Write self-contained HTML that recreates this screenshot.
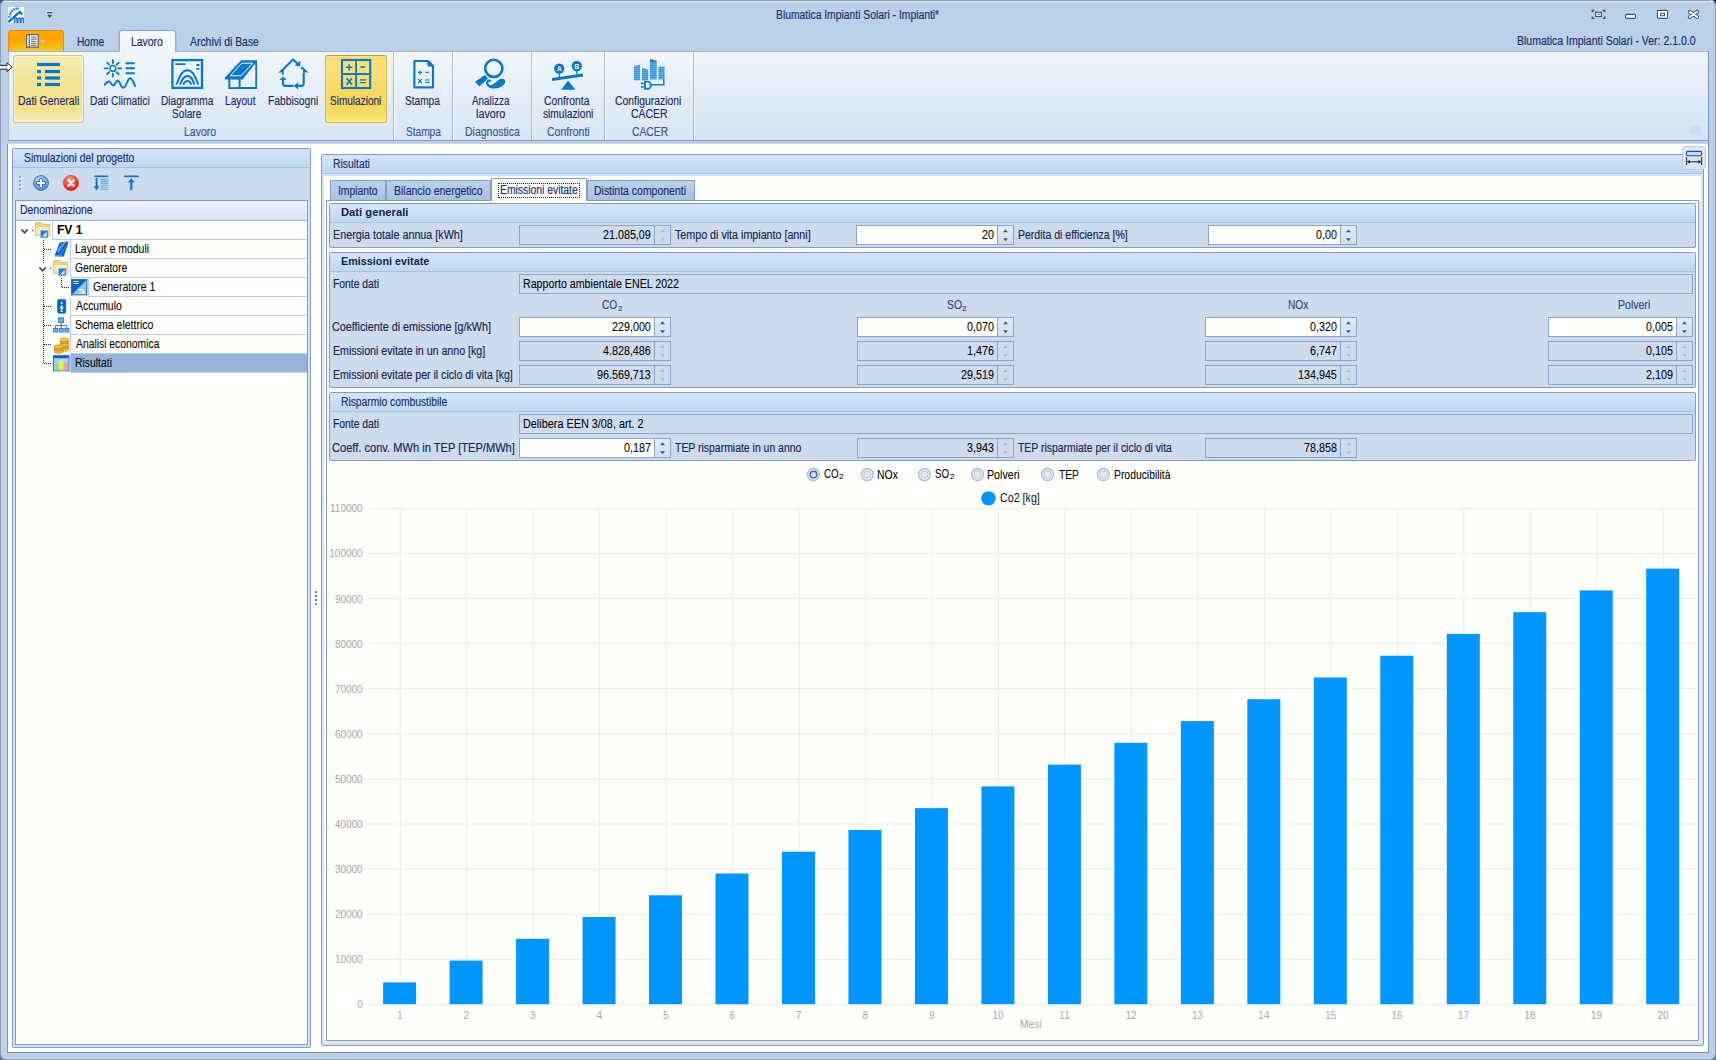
<!DOCTYPE html>
<html><head><meta charset="utf-8"><title>Blumatica Impianti Solari</title>
<style>
*{box-sizing:border-box;margin:0;padding:0}
html,body{width:1716px;height:1060px;overflow:hidden}
body{position:relative;background:#bbd0e9;font-family:"Liberation Sans",sans-serif;font-size:12px;color:#15284f}
.a{position:absolute}
.t{position:absolute;white-space:pre;transform-origin:0 50%;display:block;-webkit-text-stroke:.16px currentColor}
svg{position:absolute;overflow:visible}
.hl{position:absolute;height:1px}
.vl{position:absolute;width:1px}
.fld{position:absolute;height:20px;border:1px solid #8fa8c8;background:#cddcee}
.fld.w{background:#fffffb;border-color:#8fa8c8}
.fld .sp{position:absolute;right:0;top:0;bottom:0;width:17px;border-left:1px solid #8fa8c8;background:#cddcee}
.fld.w .sp{background:#d5e3f4}
.grp{position:absolute;border:1px solid #7f9fca;background:#cddcee;border-radius:2px}
.grp .gh{position:absolute;left:0;right:0;top:0;height:19px;background:linear-gradient(#d8e7fa,#c3d9f3);border-bottom:1px solid #a9c2e2}
.row{position:absolute;border-bottom:1px solid #b9d0f0;border-left:1px solid #b9d0f0;height:19px;background:#fffffb}

</style></head>
<body>
<div class="a" style="left:0px;top:0px;width:1716px;height:1060px;background:#bbd0e9;border:1px solid #8c9db4;border-radius:7px 7px 6px 6px"></div>
<div class="a" style="left:1px;top:1px;width:1714px;height:1px;background:#dde9f6;border-radius:6px"></div>
<svg style="left:0;top:0" width="1716" height="1060"><path d="M0 0H5Q1 1 0 5Z" fill="#27479a"/><path d="M1716 0H1712Q1715 1 1716 5Z" fill="#1b2f6e"/><path d="M0 1060V1054Q1 1059 6 1060Z" fill="#6a7a8c"/><path d="M1716 1060V1054Q1715 1059 1710 1060Z" fill="#6a7a8c"/></svg>
<span class="t" style="left:775.75px;top:8.84px;font-size:12px;line-height:12px;color:#1a2e6c;transform:scaleX(0.8612);">Blumatica Impianti Solari - Impianti*</span>
<span class="t" style="left:1516.64px;top:34.84px;font-size:12px;line-height:12px;color:#1a2e6c;transform:scaleX(0.8745);">Blumatica Impianti Solari - Ver: 2.1.0.0</span>
<svg style="left:8px;top:7px" width="16" height="16" viewBox="0 0 16 16"><rect width="16" height="16" fill="#fffffb"/>
<path d="M0.4 15 L11.8 4.9 L14 7.6" fill="none" stroke="#0a6fc2" stroke-width="2.3" stroke-linejoin="round"/>
<path d="M.2 9.7l2.3 .6M.7 7.1l2.2 .9M1.8 4.8l1.9 1.4M3.4 2.9l1.5 1.8M5.5 1.4l1 2.1M7.9 .5l.5 2.3M10.4 .2l-.2 2.3" stroke="#1a86d8" stroke-width="1.6"/>
<path d="M6.6 16v-3.9a1.25 1.25 0 0 1 2.5 0V16M9.8 16v-3.9a1.25 1.25 0 0 1 2.5 0V16M13 16v-3.9a1.25 1.25 0 0 1 2.5 0V16" fill="#a8d6f2" stroke="#0a6fc2" stroke-width="1.1"/></svg>
<svg style="left:46px;top:11px" width="8" height="8" viewBox="0 0 8 8"><rect x=".3" y=".2" width="6.6" height="2.6" rx="1" fill="#e6eef8"/><rect x="1" y="1" width="5.3" height="1.3" fill="#3c4150"/><path d="M.6 3.6H6.8L3.7 7.2Z" fill="#3c4150" stroke="#e6eef8" stroke-width=".5"/></svg>
<svg style="left:1590px;top:8px" width="112" height="13" viewBox="1590 8 112 13">
<g fill="none" stroke="#4a4d5c" stroke-width="1.3"><path d="M1592.3 12.3v-1.8h2M1604.7 12.3v-1.8h-2M1592.3 16.5v1.8h2M1604.7 16.5v1.8h-2"/></g>
<rect x="1595.6" y="12.3" width="5.8" height="4.2" fill="#fffffb" stroke="#4a4d5c" stroke-width="1.2"/><rect x="1597.4" y="14" width="2.2" height=".9" fill="#4a4d5c"/>
<rect x="1625.5" y="14.4" width="10" height="4" rx="1.2" fill="#fffffb" stroke="#4a4d5c" stroke-width="1.1"/>
<rect x="1657.5" y="10.4" width="10" height="8" rx="1.2" fill="#fffffb" stroke="#4a4d5c" stroke-width="1.1"/><rect x="1660.6" y="13.3" width="4" height="2.4" fill="#fffffb" stroke="#4a4d5c" stroke-width="1"/>
<path d="M1689.8 11.9L1697.1 16.9M1697.1 11.9L1689.8 16.9" stroke="#4a4d5c" stroke-width="4" stroke-linecap="round" fill="none"/><path d="M1689.8 11.9L1697.1 16.9M1697.1 11.9L1689.8 16.9" stroke="#fffffb" stroke-width="1.9" stroke-linecap="round" fill="none"/>
</svg>
<div class="a" style="left:8px;top:30px;width:56px;height:22px;border:1px solid #ff7a0a;border-bottom:none;border-radius:4px 4px 0 0;background:linear-gradient(#ffab08,#ffa500 45%,#f7bd10 75%,#f2d522)"></div>
<svg style="left:26px;top:34px" width="22" height="15" viewBox="0 0 22 15"><rect x=".6" y=".6" width="11.6" height="12.6" fill="#fffffb" stroke="#5a5e6e" stroke-width="1.2"/><path d="M3.2 .6v12.6" stroke="#5a5e6e" stroke-width="1.2"/><path d="M5 3.1h5.6M5 5.2h5.6M5 7.3h5.6M5 9.4h5.6M5 11.4h5.6" stroke="#5a5e6e" stroke-width="1"/><path d="M14.3 6.6h5l-2.5 2.6z" fill="#c9c0b8" stroke="#f0d890" stroke-width=".5"/></svg>
<div class="a" style="left:118px;top:30px;width:59px;height:22px;border-radius:4px 4px 0 0;background:linear-gradient(90deg,rgba(120,150,190,.0),rgba(120,150,190,.55) 2%,rgba(120,150,190,.0) 4%,rgba(120,150,190,0) 96%,rgba(120,150,190,.45) 98%,rgba(120,150,190,0))"></div>
<div class="a" style="left:119px;top:30px;width:57px;height:22.5px;border:1px solid #92abcc;border-bottom:none;border-radius:3px 3px 0 0;background:linear-gradient(#f6faff,#eef5fd)"></div>
<span class="t" style="left:76.96px;top:35.84px;font-size:12px;line-height:12px;color:#1a2e6c;transform:scaleX(0.8494);">Home</span>
<span class="t" style="left:131.44px;top:35.84px;font-size:12px;line-height:12px;color:#1a2e6c;transform:scaleX(0.8692);">Lavoro</span>
<span class="t" style="left:190.28px;top:35.84px;font-size:12px;line-height:12px;color:#1a2e6c;transform:scaleX(0.8679);">Archivi di Base</span>
<div class="a" style="left:8px;top:51px;width:1701px;height:90px;border:1px solid #8fb0d8;border-left-color:#a9bfdb;border-top-color:#9fb6d3;border-bottom-color:#849ec2;background:linear-gradient(#eef5fd,#e5eff9 30%,#d9e7f4 80%,#d4e4f2)"></div>
<div class="a" style="left:9px;top:52px;width:684px;height:88px;background:linear-gradient(#f0f6fd,#e8f1fa 30%,#dde9f5 80%,#d8e6f3)"></div>
<div class="a" style="left:120px;top:50px;width:55px;height:3px;background:linear-gradient(#eff5fd,#eef5fd)"></div>
<div class="a" style="left:8px;top:141px;width:1701px;height:3px;background:linear-gradient(#bccbdf,#c6d4e8)"></div>
<div class="a" style="left:392.5px;top:52px;width:1px;height:88px;background:linear-gradient(#b4c6dd,#a9bcd6 30%,#a3b8d4)"></div>
<div class="a" style="left:393.5px;top:52px;width:1px;height:88px;background:rgba(255,255,255,.7)"></div>
<div class="a" style="left:452px;top:52px;width:1px;height:88px;background:linear-gradient(#b4c6dd,#a9bcd6 30%,#a3b8d4)"></div>
<div class="a" style="left:453px;top:52px;width:1px;height:88px;background:rgba(255,255,255,.7)"></div>
<div class="a" style="left:531px;top:52px;width:1px;height:88px;background:linear-gradient(#b4c6dd,#a9bcd6 30%,#a3b8d4)"></div>
<div class="a" style="left:532px;top:52px;width:1px;height:88px;background:rgba(255,255,255,.7)"></div>
<div class="a" style="left:604px;top:52px;width:1px;height:88px;background:linear-gradient(#b4c6dd,#a9bcd6 30%,#a3b8d4)"></div>
<div class="a" style="left:605px;top:52px;width:1px;height:88px;background:rgba(255,255,255,.7)"></div>
<div class="a" style="left:693px;top:52px;width:1px;height:88px;background:linear-gradient(#b4c6dd,#a9bcd6 30%,#a3b8d4)"></div>
<div class="a" style="left:694px;top:52px;width:1px;height:88px;background:rgba(255,255,255,.7)"></div>
<div class="a" style="left:13px;top:55px;width:71px;height:68px;border:1px solid #e6c65c;border-radius:3px;box-shadow:inset 0 0 0 1px rgba(255,253,235,.55);background:linear-gradient(#f5edb6,#f3e597 35%,#f2df88 80%,#f4e6a2 89%,#f8f1cc)"></div>
<div class="a" style="left:325px;top:55px;width:62px;height:68px;border:1px solid #e2b340;border-top-color:#c99a35;border-radius:3px;box-shadow:inset 0 0 0 1px rgba(255,240,170,.35);background:linear-gradient(#f8dd72,#fbe07a 15%,#f9d962 55%,#f8d658 78%,#f6e26a 90%,#f4ec7c)"></div>
<span class="t" style="left:17.94px;top:94.84px;font-size:12px;line-height:12px;color:#1a2e6c;transform:scaleX(0.8741);">Dati Generali</span>
<span class="t" style="left:90.06px;top:94.84px;font-size:12px;line-height:12px;color:#1a2e6c;transform:scaleX(0.8532);">Dati Climatici</span>
<span class="t" style="left:161.07px;top:94.84px;font-size:12px;line-height:12px;color:#1a2e6c;transform:scaleX(0.8446);">Diagramma</span>
<span class="t" style="left:172.34px;top:107.84px;font-size:12px;line-height:12px;color:#1a2e6c;transform:scaleX(0.8450);">Solare</span>
<span class="t" style="left:225.47px;top:94.84px;font-size:12px;line-height:12px;color:#1a2e6c;transform:scaleX(0.8482);">Layout</span>
<span class="t" style="left:268.46px;top:94.84px;font-size:12px;line-height:12px;color:#1a2e6c;transform:scaleX(0.8548);">Fabbisogni</span>
<span class="t" style="left:330.34px;top:94.84px;font-size:12px;line-height:12px;color:#1a2e6c;transform:scaleX(0.8358);">Simulazioni</span>
<span class="t" style="left:404.84px;top:94.84px;font-size:12px;line-height:12px;color:#1a2e6c;transform:scaleX(0.8429);">Stampa</span>
<span class="t" style="left:472.28px;top:94.84px;font-size:12px;line-height:12px;color:#1a2e6c;transform:scaleX(0.8250);">Analizza</span>
<span class="t" style="left:475.82px;top:107.84px;font-size:12px;line-height:12px;color:#1a2e6c;transform:scaleX(0.8973);">lavoro</span>
<span class="t" style="left:544.27px;top:94.84px;font-size:12px;line-height:12px;color:#1a2e6c;transform:scaleX(0.8620);">Confronta</span>
<span class="t" style="left:542.52px;top:107.84px;font-size:12px;line-height:12px;color:#1a2e6c;transform:scaleX(0.8486);">simulazioni</span>
<span class="t" style="left:615.27px;top:94.84px;font-size:12px;line-height:12px;color:#1a2e6c;transform:scaleX(0.8653);">Configurazioni</span>
<span class="t" style="left:630.52px;top:107.84px;font-size:12px;line-height:12px;color:#1a2e6c;transform:scaleX(0.8668);">CACER</span>
<span class="t" style="left:184.44px;top:125.84px;font-size:12px;line-height:12px;color:#3a5590;transform:scaleX(0.8778);">Lavoro</span>
<span class="t" style="left:406.09px;top:125.84px;font-size:12px;line-height:12px;color:#3a5590;transform:scaleX(0.8429);">Stampa</span>
<span class="t" style="left:464.94px;top:125.84px;font-size:12px;line-height:12px;color:#3a5590;transform:scaleX(0.8733);">Diagnostica</span>
<span class="t" style="left:547.27px;top:125.84px;font-size:12px;line-height:12px;color:#3a5590;transform:scaleX(0.8758);">Confronti</span>
<span class="t" style="left:631.53px;top:125.84px;font-size:12px;line-height:12px;color:#3a5590;transform:scaleX(0.8607);">CACER</span>
<svg style="left:0;top:52px" width="720" height="44" viewBox="0 52 720 44"><g fill="#0a78c8"><rect x="37" y="62.9" width="23" height="3.2"/><rect x="37" y="69.9" width="4" height="3.2"/><rect x="45" y="69.9" width="15" height="3.2"/><rect x="37" y="76.4" width="4" height="3.2"/><rect x="45" y="76.4" width="15" height="3.2"/><rect x="37" y="82.9" width="4" height="3.2"/><rect x="45" y="82.9" width="15" height="3.2"/></g><g fill="none" stroke="#0a78c8" stroke-width="1.9" stroke-linecap="round"><circle cx="112.9" cy="68.4" r="2.9" stroke-width="1.5"/><path d="M118.20 68.40L121.10 68.40"/><path d="M116.65 72.15L118.70 74.20"/><path d="M112.90 73.70L112.90 76.60"/><path d="M109.15 72.15L107.10 74.20"/><path d="M107.60 68.40L104.70 68.40"/><path d="M109.15 64.65L107.10 62.60"/><path d="M112.90 63.10L112.90 60.20"/><path d="M116.65 64.65L118.70 62.60"/><path d="M125.6 63.3H134.8M125.6 68.3H134.8M125.6 73.3H134.8" stroke-width="2" stroke-linecap="butt"/><path d="M104.8 84.6C106.2 82.6 107.6 81.6 108.8 81.6C110.8 81.6 111.4 85.4 113.4 85.4C115.4 85.4 115.8 80.6 117.6 80.6C119.8 80.6 120.6 87.8 123.4 87.8C126.4 87.8 127.4 78.2 130 78.2C132.4 78.2 133.6 83.2 135.2 86" stroke-width="2"/></g><g fill="none" stroke="#0a78c8"><rect x="172.4" y="60.1" width="29.6" height="27.8" stroke-width="2.3"/><path d="M175.4 64.2H185.6M196.3 65H199.4M196.3 68.8H199.4" stroke-width="1.8"/><path d="M176.4 84.6C180 76 182 70.2 187.4 70.2C192.8 70.2 194.8 76 198.4 84.6" stroke-width="1.9"/><path d="M180 84.6C182 79.6 183.6 76 187.4 76C191.2 76 192.8 79.6 194.6 84.6" stroke-width="1.9"/><path d="M183.2 84.6C184.4 82.4 185.4 81 187.4 81C189.4 81 190.4 82.4 191.4 84.6" stroke-width="1.9"/></g><g><path d="M241.2 60.2H257.1V88.9H228.3V79.6H224.9V77.6Z" fill="#0a78c8"/><path d="M255.3 63.4L242.6 79.6H240.6V87.1H255.3Z" fill="#e9f1fb"/><path d="M230.3 79.6H238.6V87.1H230.3Z" fill="#e9f1fb"/><path d="M241.6 63.2H252.8L241.2 75.7H230.4Z" fill="none" stroke="#eef5fd" stroke-width="1"/></g><g fill="none" stroke="#0a78c8" stroke-width="2.1" stroke-linejoin="round"><path d="M281 71.4L293 59.4L298.6 64.6"/><path d="M301.4 67L305.8 71.4"/><path d="M303.7 72.4V83.4Q303.7 85.9 301.2 85.9H297.4"/><path d="M293.4 85.9H285.6Q283 85.9 283 83.4V79.4"/><path d="M283 74.6V72.4"/></g><g fill="#0a78c8"><path d="M300.6 60.6L299.9 66.4L294.8 65.4Z"/><path d="M278 72.6L283.6 68.8V72.6Z"/><path d="M308.9 72.6L303 68.4V72.6Z"/><path d="M293.6 85.9L298.2 82.2V89.6Z"/><path d="M283 76.6L286.6 80H279.4Z"/></g><g fill="none" stroke="#0a78c8"><rect x="342" y="60" width="28.2" height="28" stroke-width="2.1"/><path d="M356.1 60V88M342 74H370.2" stroke-width="1.8"/><path d="M346 67.3H352.4M349.2 64.2V70.4M360.4 67H365.2" stroke-width="1.6"/><path d="M346.6 78.2L352 84.6M352 78.2L346.6 84.6" stroke-width="1.7"/><path d="M360 79.8H366M360 82.6H366" stroke-width="1.3"/></g><g fill="none" stroke="#0a78c8"><path d="M414.4 61H428L433 66V87.4H414.4Z" stroke-width="2.1" stroke-linejoin="round"/><path d="M428 60.4L433.6 66H428Z" fill="#0a78c8" stroke-width="1"/><path d="M418 72.4H422M420 70.4V74.4M425.6 72.4H428.8" stroke-width="1.2"/><path d="M418.2 79.2L421.8 83M421.8 79.2L418.2 83" stroke-width="1.2"/><path d="M425 80H429.6M425 82.4H429.6" stroke-width="1"/></g><g><circle cx="493.8" cy="68.4" r="8.6" fill="none" stroke="#0a78c8" stroke-width="2.6"/><path d="M485 75.4L487.6 78.4L479.4 86L475.4 81.8Z" fill="#0a78c8" stroke="#0a78c8" stroke-width=".8" stroke-linejoin="round"/><path d="M488.6 79.6C485.4 80.4 485.2 85 488.4 87C492.4 89.6 499 88.8 503 85.6C506.4 82.8 506 79.2 502.6 78.8C498.6 78.4 496.6 82.4 492.6 84.6C489.6 86.2 487.4 84.2 488.6 82.2C489.4 81 491 81.4 491.2 82.4C491.6 80.6 490.4 79.2 488.6 79.6Z" fill="#0a78c8"/></g><g fill="#0a78c8"><circle cx="559.25" cy="68.6" r="5.2"/><circle cx="576.8" cy="66" r="5.2"/><path d="M552 78L583 73.4V76.4L552 81Z"/><rect x="558.7" y="73" width="1.2" height="5"/><rect x="576.2" y="70.6" width="1.2" height="4.4"/><path d="M568.2 80.4L575.4 89.8H561Z"/></g><text x="559.25" y="71.2" font-size="7" font-weight="bold" fill="#e9f1fb" text-anchor="middle" font-family="Liberation Sans">A</text><text x="576.8" y="68.6" font-size="7" font-weight="bold" fill="#e9f1fb" text-anchor="middle" font-family="Liberation Sans">B</text><g fill="#1480d2"><path d="M634 66L640.1 64.8V80.2H634Z"/><path d="M642 67.8L648.2 69.6V80.2H642Z"/><path d="M650 59L656.8 60.8V79.4H650Z"/><path d="M658.3 66.6H664.6V79.4H658.3Z"/></g><g stroke="#e3ecf8" stroke-width=".8" opacity=".75"><path d="M634 62.9H665"/><path d="M634 64.9H665"/><path d="M634 66.9H665"/><path d="M634 68.9H665"/><path d="M634 70.9H665"/><path d="M634 72.9H665"/><path d="M634 74.9H665"/><path d="M634 76.9H665"/><path d="M634 78.9H665"/></g><path d="M663.8 79V84.8H650.6" fill="none" stroke="#1480d2" stroke-width="1.5"/><path d="M645 81.6H647.4A3.4 3.6 0 0 1 647.4 88.8H645Z" fill="none" stroke="#1480d2" stroke-width="1.9"/><path d="M640.8 83.4H645M640.8 87H645" stroke="#1480d2" stroke-width="1.7"/></svg>
<svg style="left:0;top:58px" width="14" height="16" viewBox="0 58 14 16"><path d="M-1 65.4H7V62.8L12.2 67.2L7 71.6V69.2H-1Z" fill="#fffffb" stroke="#222" stroke-width="1"/></svg>
<svg style="left:1688px;top:122px" width="15" height="15" viewBox="0 0 15 15" opacity=".55"><rect x="1.5" y="3.5" width="11" height="9" fill="#b9def2"/><path d="M0 .5L14 14" stroke="#b9def2" stroke-width="1"/></svg>
<div class="a" style="left:7px;top:144px;width:1702px;height:909px;background:#fffffb;border-left:1px solid #6f93c2;border-right:1px solid #6f93c2;border-bottom:1px solid #6f93c2"></div>
<div class="a" style="left:12px;top:148px;width:299px;height:900px;border:1px solid #7f9fca;border-radius:2px;background:#d4e3f5"></div>
<div class="a" style="left:13px;top:149px;width:297px;height:18.5px;background:linear-gradient(#d3e5fa,#c9dff6 50%,#bfd7f1);border-bottom:1px solid #a9c2e2"></div>
<div class="a" style="left:13px;top:167.5px;width:297px;height:34px;background:#ccdced"></div>
<span class="t" style="left:24.08px;top:151.84px;font-size:12px;line-height:12px;color:#1a2e6c;transform:scaleX(0.8612);">Simulazioni del progetto</span>
<div class="a" style="left:19px;top:176px;width:2px;height:2px;background:#8da5c6;box-shadow:1px 1px 0 rgba(255,255,255,.6)"></div>
<div class="a" style="left:19px;top:180px;width:2px;height:2px;background:#8da5c6;box-shadow:1px 1px 0 rgba(255,255,255,.6)"></div>
<div class="a" style="left:19px;top:184px;width:2px;height:2px;background:#8da5c6;box-shadow:1px 1px 0 rgba(255,255,255,.6)"></div>
<div class="a" style="left:19px;top:188px;width:2px;height:2px;background:#8da5c6;box-shadow:1px 1px 0 rgba(255,255,255,.6)"></div>
<svg style="left:30px;top:172px" width="112" height="22" viewBox="30 172 112 22">
<defs><radialGradient id="gb" cx=".42" cy=".28" r=".85"><stop offset="0" stop-color="#b9d8fb"/><stop offset=".5" stop-color="#6ea6ec"/><stop offset="1" stop-color="#3f74cf"/></radialGradient>
<radialGradient id="gr" cx=".42" cy=".25" r=".85"><stop offset="0" stop-color="#ff9c8c"/><stop offset=".5" stop-color="#f04330"/><stop offset="1" stop-color="#c81c12"/></radialGradient></defs>
<circle cx="41" cy="183" r="7.5" fill="url(#gb)" stroke="#3f6fc4" stroke-width=".9"/>
<path d="M41 179.7V186.3M37.7 183H44.3" stroke="#2f62c0" stroke-width="3.5" stroke-linecap="round"/><path d="M41 179.8V186.2M37.8 183H44.2" stroke="#fffffb" stroke-width="1.9" stroke-linecap="round"/>
<circle cx="71" cy="183" r="7.7" fill="url(#gr)" stroke="#d8382a" stroke-width=".6"/>
<path d="M68.5 180.5L73.5 185.5M73.5 180.5L68.5 185.5" stroke="#f6f0ee" stroke-width="2.7" stroke-linecap="round"/>
<g stroke="#0a78c8" fill="none"><path d="M94 176.3H108.4" stroke-width="1.7"/><path d="M96.6 178V187" stroke-width="1.9"/><path d="M93.9 186.2L96.6 190.2L99.3 186.2Z" fill="#0a78c8" stroke-width=".3"/>
<path d="M100.6 179.2H108.4M100.6 181.2H108.4M100.6 183.2H108.4" stroke-width=".9" stroke="#3d94d6"/><path d="M100.6 185.2H108.4M100.6 187.2H108.4M100.6 189.2H108.4" stroke-width=".9" stroke="#5aa6e0"/>
<path d="M123.8 176.3H138.8" stroke-width="1.7"/><path d="M131.3 181V190.2" stroke-width="2.1"/><path d="M128.2 182.2L131.3 178.4L134.4 182.2Z" fill="#0a78c8" stroke-width=".3"/></g>
</svg>
<div class="a" style="left:15px;top:200px;width:293px;height:845px;border:1px solid #7f9fca;background:#fffffb"></div>
<div class="a" style="left:16px;top:201px;width:291px;height:20px;background:linear-gradient(#eef4fc,#dfeaf8 60%,#d6e4f5);border-bottom:1px solid #9fb8da"></div>
<span class="t" style="left:19.94px;top:203.84px;font-size:12px;line-height:12px;color:#1a2e6c;transform:scaleX(0.8709);">Denominazione</span>
<div class="a" style="left:52px;top:220.5px;width:255px;height:19.5px;border-left:1px solid #b5cdf0;border-bottom:1px solid #b5cdf0;background:#fffffb"></div>
<div class="a" style="left:70px;top:239.5px;width:237px;height:19.5px;border-left:1px solid #b5cdf0;border-bottom:1px solid #b5cdf0;background:#fffffb"></div>
<div class="a" style="left:70px;top:258.5px;width:237px;height:19.5px;border-left:1px solid #b5cdf0;border-bottom:1px solid #b5cdf0;background:#fffffb"></div>
<div class="a" style="left:88px;top:277.5px;width:219px;height:19.5px;border-left:1px solid #b5cdf0;border-bottom:1px solid #b5cdf0;background:#fffffb"></div>
<div class="a" style="left:70px;top:296.5px;width:237px;height:19.5px;border-left:1px solid #b5cdf0;border-bottom:1px solid #b5cdf0;background:#fffffb"></div>
<div class="a" style="left:70px;top:315.5px;width:237px;height:19.5px;border-left:1px solid #b5cdf0;border-bottom:1px solid #b5cdf0;background:#fffffb"></div>
<div class="a" style="left:70px;top:334.5px;width:237px;height:19.5px;border-left:1px solid #b5cdf0;border-bottom:1px solid #b5cdf0;background:#fffffb"></div>
<div class="a" style="left:70px;top:353.5px;width:237px;height:19.5px;border-left:1px solid #b5cdf0;border-bottom:1px solid #b5cdf0;background:#95b3d7"></div>
<span class="t" style="left:57.25px;top:223.84px;font-size:12px;line-height:12px;color:#000;font-weight:bold;-webkit-text-stroke:0;-webkit-text-stroke:.06px #000;transform:scaleX(1.0019);">FV 1</span>
<span class="t" style="left:74.94px;top:242.84px;font-size:12px;line-height:12px;color:#000;-webkit-text-stroke:.06px #000;transform:scaleX(0.8743);">Layout e moduli</span>
<span class="t" style="left:75.28px;top:261.84px;font-size:12px;line-height:12px;color:#000;-webkit-text-stroke:.06px #000;transform:scaleX(0.8612);">Generatore</span>
<span class="t" style="left:92.77px;top:280.84px;font-size:12px;line-height:12px;color:#000;-webkit-text-stroke:.06px #000;transform:scaleX(0.8832);">Generatore 1</span>
<span class="t" style="left:75.78px;top:299.84px;font-size:12px;line-height:12px;color:#000;-webkit-text-stroke:.06px #000;transform:scaleX(0.8685);">Accumulo</span>
<span class="t" style="left:75.32px;top:318.84px;font-size:12px;line-height:12px;color:#000;-webkit-text-stroke:.06px #000;transform:scaleX(0.8774);">Schema elettrico</span>
<span class="t" style="left:75.78px;top:337.84px;font-size:12px;line-height:12px;color:#000;-webkit-text-stroke:.06px #000;transform:scaleX(0.8625);">Analisi economica</span>
<span class="t" style="left:74.95px;top:356.84px;font-size:12px;line-height:12px;color:#000;-webkit-text-stroke:.06px #000;transform:scaleX(0.8658);">Risultati</span>
<svg style="left:16px;top:220px" width="75" height="155" viewBox="16 220 75 155"><g stroke="#222" stroke-width="1" stroke-dasharray="1 1" fill="none"><path d="M43.5 240V263"/><path d="M43.5 274V363.5"/><path d="M44 249.5H51"/><path d="M50 268.5H52"/><path d="M61.5 278V287.5H70"/><path d="M44 306.5H52"/><path d="M44 325.5H52"/><path d="M44 344.5H52"/><path d="M44 363.5H52"/><path d="M32 230.5H34"/></g><path d="M21.4 229.4L24.6 232.8L27.8 229.4" fill="none" stroke="#3c4a66" stroke-width="1.6"/><path d="M39.4 267.4L42.6 270.8L45.8 267.4" fill="none" stroke="#3c4a66" stroke-width="1.6"/><path d="M35.6 222.6h5.6l1.6 1.8h6.8v11h-14z" fill="#f3d884" stroke="#c9a84e" stroke-width=".7"/><path d="M35.6 226.4h14v8.8h-14z" fill="#fbeeb4" stroke="#d9bc62" stroke-width=".5"/><rect x="40.6" y="230.4" width="7.4" height="7.4" fill="#1f7ae0" stroke="#8cc4f4" stroke-width=".7"/><path d="M42 236.4l4.6 -4.6v4.6z" fill="#d6ecfc"/><path d="M53.6 260.6h5.6l1.6 1.8h6.8v11h-14z" fill="#f3d884" stroke="#c9a84e" stroke-width=".7"/><path d="M53.6 264.4h14v8.8h-14z" fill="#fbeeb4" stroke="#d9bc62" stroke-width=".5"/><rect x="58.6" y="268.4" width="7.4" height="7.4" fill="#1f7ae0" stroke="#8cc4f4" stroke-width=".7"/><path d="M60 274.4l4.6 -4.6v4.6z" fill="#d6ecfc"/><path d="M59.6 242.6L68.6 241.4L64 256L54.6 255.4Z" fill="#0a5fc4"/><path d="M62 242.4L66.4 241.8L58.4 253.2L56.6 251Z" fill="#4a9ae8"/><path d="M68 243.4L67 246.6L61.2 255.8L58.4 255.6Z" fill="#2a7ede"/><path d="M54.6 255.4L64 256L63.4 257.2L54.2 256.6Z" fill="#9aa2b0"/><rect x="71.4" y="279.4" width="15.6" height="15.6" fill="#0a5fc4" stroke="#0a4fa8" stroke-width=".6"/><path d="M72 294.4L86.4 280V294.4Z" fill="#8fc8ea"/><path d="M73.4 281.5H78.6M73.4 283.5H78.6" stroke="#fffffb" stroke-width="1"/><path d="M79.2 290.4q1.5 -2.2 2.9 0t2.9 0M79.2 293H85" stroke="#fffffb" stroke-width="1.15" fill="none"/><rect x="57.6" y="299.6" width="8.2" height="13.6" rx="1.4" fill="#0a63d0" stroke="#0a4fb0" stroke-width=".6"/><rect x="59.8" y="298.8" width="3.8" height="1.4" fill="#4a88dd"/><path d="M61.7 302V304M60.7 303H62.7M62.4 305.2L60.6 307.8H62.8L61 310.4M60.6 311.4H62.8" stroke="#fffffb" stroke-width="1.2" fill="none"/><g fill="#6cb4ee" stroke="#1f78d0" stroke-width=".9"><rect x="58.6" y="317.8" width="5" height="4.6"/><rect x="53.6" y="328.4" width="4" height="3.6"/><rect x="59.2" y="328.4" width="4" height="3.6"/><rect x="64.8" y="328.4" width="4" height="3.6"/></g><path d="M61.1 322.4V325.4M55.6 328.4V325.4H66.8V328.4M61.2 325.4V328.4" stroke="#4a5a70" stroke-width=".9" fill="none"/><g stroke="#b07a10" stroke-width=".6"><ellipse cx="64.4" cy="349.4" rx="4.6" ry="1.9" fill="#f5c842"/><ellipse cx="64.4" cy="347" rx="4.6" ry="1.9" fill="#e8a820"/><ellipse cx="64.4" cy="344.6" rx="4.6" ry="1.9" fill="#f5c842"/><ellipse cx="64.4" cy="342.2" rx="4.6" ry="1.9" fill="#e8a820"/><ellipse cx="64.4" cy="339.8" rx="4.6" ry="1.9" fill="#f5c842"/><ellipse cx="58.6" cy="351.6" rx="4.6" ry="1.9" fill="#f5c842"/><ellipse cx="58.6" cy="349.2" rx="4.6" ry="1.9" fill="#e8a820"/><ellipse cx="58.6" cy="346.8" rx="4.6" ry="1.9" fill="#f5c842"/></g><rect x="53.4" y="355.6" width="15.6" height="15.2" fill="#a8d4f6" stroke="#1a5fd0" stroke-width=".9"/><rect x="53.8" y="356" width="14.8" height="2.2" fill="#1a5fd0"/><rect x="54.6" y="364" width="4.4" height="6.4" fill="#8fe08a"/><rect x="59" y="360.4" width="4.6" height="10" fill="#e8f050"/><rect x="63.6" y="362.4" width="4.6" height="8" fill="#f8a09a"/></svg>
<div class="a" style="left:315px;top:591px;width:2px;height:2px;background:#5f84b8"></div>
<div class="a" style="left:315px;top:595px;width:2px;height:2px;background:#5f84b8"></div>
<div class="a" style="left:315px;top:599px;width:2px;height:2px;background:#5f84b8"></div>
<div class="a" style="left:315px;top:603px;width:2px;height:2px;background:#5f84b8"></div>
<div class="a" style="left:321px;top:154px;width:1383px;height:892px;border:1px solid #7f9fca;border-radius:2px;background:#d4e3f5"></div>
<div class="a" style="left:322px;top:155px;width:1381px;height:19px;background:linear-gradient(#d3e5fa,#c9dff6 50%,#bfd7f1);border-bottom:1px solid #a9c2e2"></div>
<div class="a" style="left:322px;top:174px;width:1381px;height:2px;background:#d4e3f5"></div>
<div class="a" style="left:324px;top:176px;width:1377px;height:867px;background:#fffffb"></div>
<span class="t" style="left:332.75px;top:157.84px;font-size:12px;line-height:12px;color:#1a2e6c;transform:scaleX(0.8634);">Risultati</span>
<div class="a" style="left:1682px;top:146px;width:24px;height:24px;border:1px solid #bccfe6;border-radius:3px;background:linear-gradient(#dfeaf8,#d2e1f3)"></div>
<svg style="left:1685px;top:150px" width="19" height="17" viewBox="1685 150 19 17"><rect x="1686.6" y="151.4" width="15" height="4.4" rx="1" fill="#c5e0f8" stroke="#2a4da0" stroke-width="1.1"/><path d="M1686.6 157.2V165M1701.6 157.2V165M1687.6 161.8H1700.6" stroke="#222" stroke-width="1" fill="none"/><path d="M1687.2 161.8L1689.8 159.8V163.8ZM1701 161.8L1698.4 159.8V163.8Z" fill="#222"/></svg>
<div class="a" style="left:330px;top:180px;width:56px;height:20.5px;border:1px solid #7f9fca;border-bottom:none;background:linear-gradient(#bad1eb,#b0c9e6 50%,#a7c2e0)"></div>
<div class="a" style="left:386px;top:180px;width:105px;height:20.5px;border:1px solid #7f9fca;border-bottom:none;background:linear-gradient(#bad1eb,#b0c9e6 50%,#a7c2e0)"></div>
<div class="a" style="left:587px;top:180px;width:108px;height:20.5px;border:1px solid #7f9fca;border-bottom:none;background:linear-gradient(#bad1eb,#b0c9e6 50%,#a7c2e0)"></div>
<div class="a" style="left:324px;top:1040px;width:1377px;height:3px;background:#e9e9e5"></div>
<div class="a" style="left:1698px;top:201px;width:3px;height:842px;background:#e9e9e5"></div>
<div class="a" style="left:326px;top:200px;width:1373px;height:841px;border:1px solid #7f9fca;background:#fffffb"></div>
<div class="a" style="left:491px;top:178px;width:96px;height:23px;border:1px solid #7f9fca;border-bottom:none;background:#fffffb"></div>
<div class="a" style="left:498px;top:182.5px;width:81.5px;height:15px;border:1px dotted #222"></div>
<span class="t" style="left:337.75px;top:184.84px;font-size:12px;line-height:12px;color:#1a2e6c;transform:scaleX(0.8601);">Impianto</span>
<span class="t" style="left:394.44px;top:184.84px;font-size:12px;line-height:12px;color:#1a2e6c;transform:scaleX(0.8748);">Bilancio energetico</span>
<span class="t" style="left:499.95px;top:183.84px;font-size:12px;line-height:12px;color:#1a2e6c;transform:scaleX(0.8631);">Emissioni evitate</span>
<span class="t" style="left:594.44px;top:184.84px;font-size:12px;line-height:12px;color:#1a2e6c;transform:scaleX(0.8726);">Distinta componenti</span>
<div class="a" style="left:329px;top:203px;width:1367px;height:45px;border:1px solid #7f9fca;border-radius:2px;background:#ccdced"></div>
<div class="a" style="left:330px;top:204px;width:1365px;height:18.5px;background:linear-gradient(#d3e5fa,#c9dff6 50%,#bfd7f1);border-bottom:1px solid #a9c2e2"></div>
<span class="t" style="left:341.05px;top:206.69px;font-size:11px;line-height:11px;color:#16234f;font-weight:bold;-webkit-text-stroke:0;transform:scaleX(1.0216);">Dati generali</span>
<div class="a" style="left:329px;top:252px;width:1367px;height:136px;border:1px solid #7f9fca;border-radius:2px;background:#ccdced"></div>
<div class="a" style="left:330px;top:253px;width:1365px;height:18.5px;background:linear-gradient(#d3e5fa,#c9dff6 50%,#bfd7f1);border-bottom:1px solid #a9c2e2"></div>
<span class="t" style="left:341.08px;top:255.69px;font-size:11px;line-height:11px;color:#16234f;font-weight:bold;-webkit-text-stroke:0;transform:scaleX(0.9819);">Emissioni evitate</span>
<div class="a" style="left:329px;top:392px;width:1367px;height:68.5px;border:1px solid #7f9fca;border-radius:2px;background:#ccdced"></div>
<div class="a" style="left:330px;top:393px;width:1365px;height:18.5px;background:linear-gradient(#d3e5fa,#c9dff6 50%,#bfd7f1);border-bottom:1px solid #a9c2e2"></div>
<span class="t" style="left:340.96px;top:395.84px;font-size:12px;line-height:12px;color:#1a2e6c;transform:scaleX(0.8561);">Risparmio combustibile</span>
<span class="t" style="left:332.62px;top:228.84px;font-size:12px;line-height:12px;color:#15284f;transform:scaleX(0.8970);">Energia totale annua [kWh]</span>
<div class="a" style="left:519px;top:225px;width:152px;height:20px;border:1px solid #8ca5c4;background:#ccdced"></div>
<div class="a" style="left:654px;top:226px;width:16px;height:18px;border-left:1px solid #8ca5c4;background:#ccdced"></div>
<svg style="left:660px;top:228.8px" width="6" height="14" viewBox="0 0 6 14"><path d="M0 3.2L2.5 .2L5 3.2Z" fill="#a9b9d1"/><path d="M0 9.2H5L2.5 12.2Z" fill="#a9b9d1"/></svg>
<span class="t" style="left:603.13px;top:228.84px;font-size:12px;line-height:12px;color:#000;-webkit-text-stroke:.06px #000;transform:scaleX(0.8950);">21.085,09</span>
<span class="t" style="left:674.86px;top:228.84px;font-size:12px;line-height:12px;color:#15284f;transform:scaleX(0.8917);">Tempo di vita impianto [anni]</span>
<div class="a" style="left:856px;top:225px;width:158px;height:20px;border:1px solid #8ca5c4;background:#fffffb"></div>
<div class="a" style="left:997px;top:226px;width:16px;height:18px;border-left:1px solid #8ca5c4;background:linear-gradient(#deebf9,#cfe0f2)"></div>
<svg style="left:1003px;top:228.8px" width="6" height="14" viewBox="0 0 6 14"><path d="M0 3.2L2.5 .2L5 3.2Z" fill="#4a5578"/><path d="M0 9.2H5L2.5 12.2Z" fill="#4a5578"/></svg>
<span class="t" style="left:981.87px;top:228.84px;font-size:12px;line-height:12px;color:#000;-webkit-text-stroke:.06px #000;transform:scaleX(0.8950);">20</span>
<span class="t" style="left:1017.69px;top:228.84px;font-size:12px;line-height:12px;color:#15284f;transform:scaleX(0.8768);">Perdita di efficienza [%]</span>
<div class="a" style="left:1208px;top:225px;width:149px;height:20px;border:1px solid #8ca5c4;background:#fffffb"></div>
<div class="a" style="left:1340px;top:226px;width:16px;height:18px;border-left:1px solid #8ca5c4;background:linear-gradient(#deebf9,#cfe0f2)"></div>
<svg style="left:1346px;top:228.8px" width="6" height="14" viewBox="0 0 6 14"><path d="M0 3.2L2.5 .2L5 3.2Z" fill="#4a5578"/><path d="M0 9.2H5L2.5 12.2Z" fill="#4a5578"/></svg>
<span class="t" style="left:1315.92px;top:228.84px;font-size:12px;line-height:12px;color:#000;-webkit-text-stroke:.06px #000;transform:scaleX(0.8950);">0,00</span>
<span class="t" style="left:332.65px;top:277.84px;font-size:12px;line-height:12px;color:#15284f;transform:scaleX(0.8619);">Fonte dati</span>
<div class="a" style="left:519px;top:274px;width:1174px;height:20px;border:1px solid #8ca5c4;background:#ccdced"></div>
<span class="t" style="left:522.63px;top:277.84px;font-size:12px;line-height:12px;color:#000;-webkit-text-stroke:.06px #000;transform:scaleX(0.8878);">Rapporto ambientale ENEL 2022</span>
<span class="t" style="left:602.28px;top:298.84px;font-size:12px;line-height:12px;color:#3a4a70;transform:scaleX(0.8504);">CO</span>
<span class="t" style="left:617.70px;top:304.73px;font-size:8px;line-height:8px;color:#3a4a70;transform:scaleX(0.9878);">2</span>
<span class="t" style="left:946.83px;top:298.84px;font-size:12px;line-height:12px;color:#3a4a70;transform:scaleX(0.8632);">SO</span>
<span class="t" style="left:961.90px;top:304.73px;font-size:8px;line-height:8px;color:#3a4a70;transform:scaleX(1.0015);">2</span>
<span class="t" style="left:1287.72px;top:298.84px;font-size:12px;line-height:12px;color:#3a4a70;transform:scaleX(0.8477);">NOx</span>
<span class="t" style="left:1617.69px;top:298.84px;font-size:12px;line-height:12px;color:#3a4a70;transform:scaleX(0.8786);">Polveri</span>
<span class="t" style="left:332.25px;top:320.84px;font-size:12px;line-height:12px;color:#15284f;transform:scaleX(0.8971);">Coefficiente di emissione [g/kWh]</span>
<span class="t" style="left:332.63px;top:344.84px;font-size:12px;line-height:12px;color:#15284f;transform:scaleX(0.8837);">Emissioni evitate in un anno [kg]</span>
<span class="t" style="left:332.63px;top:368.84px;font-size:12px;line-height:12px;color:#15284f;transform:scaleX(0.8811);">Emissioni evitate per il ciclo di vita [kg]</span>
<div class="a" style="left:519px;top:317px;width:152px;height:20px;border:1px solid #8ca5c4;background:#fffffb"></div>
<div class="a" style="left:654px;top:318px;width:16px;height:18px;border-left:1px solid #8ca5c4;background:linear-gradient(#deebf9,#cfe0f2)"></div>
<svg style="left:660px;top:320.8px" width="6" height="14" viewBox="0 0 6 14"><path d="M0 3.2L2.5 .2L5 3.2Z" fill="#4a5578"/><path d="M0 9.2H5L2.5 12.2Z" fill="#4a5578"/></svg>
<span class="t" style="left:612.00px;top:320.84px;font-size:12px;line-height:12px;color:#000;-webkit-text-stroke:.06px #000;transform:scaleX(0.8950);">229,000</span>
<div class="a" style="left:857px;top:317px;width:157px;height:20px;border:1px solid #8ca5c4;background:#fffffb"></div>
<div class="a" style="left:997px;top:318px;width:16px;height:18px;border-left:1px solid #8ca5c4;background:linear-gradient(#deebf9,#cfe0f2)"></div>
<svg style="left:1003px;top:320.8px" width="6" height="14" viewBox="0 0 6 14"><path d="M0 3.2L2.5 .2L5 3.2Z" fill="#4a5578"/><path d="M0 9.2H5L2.5 12.2Z" fill="#4a5578"/></svg>
<span class="t" style="left:966.94px;top:320.84px;font-size:12px;line-height:12px;color:#000;-webkit-text-stroke:.06px #000;transform:scaleX(0.8950);">0,070</span>
<div class="a" style="left:1205px;top:317px;width:152px;height:20px;border:1px solid #8ca5c4;background:#fffffb"></div>
<div class="a" style="left:1340px;top:318px;width:16px;height:18px;border-left:1px solid #8ca5c4;background:linear-gradient(#deebf9,#cfe0f2)"></div>
<svg style="left:1346px;top:320.8px" width="6" height="14" viewBox="0 0 6 14"><path d="M0 3.2L2.5 .2L5 3.2Z" fill="#4a5578"/><path d="M0 9.2H5L2.5 12.2Z" fill="#4a5578"/></svg>
<span class="t" style="left:1309.94px;top:320.84px;font-size:12px;line-height:12px;color:#000;-webkit-text-stroke:.06px #000;transform:scaleX(0.8950);">0,320</span>
<div class="a" style="left:1548px;top:317px;width:145px;height:20px;border:1px solid #8ca5c4;background:#fffffb"></div>
<div class="a" style="left:1676px;top:318px;width:16px;height:18px;border-left:1px solid #8ca5c4;background:linear-gradient(#deebf9,#cfe0f2)"></div>
<svg style="left:1682px;top:320.8px" width="6" height="14" viewBox="0 0 6 14"><path d="M0 3.2L2.5 .2L5 3.2Z" fill="#4a5578"/><path d="M0 9.2H5L2.5 12.2Z" fill="#4a5578"/></svg>
<span class="t" style="left:1645.97px;top:320.84px;font-size:12px;line-height:12px;color:#000;-webkit-text-stroke:.06px #000;transform:scaleX(0.8950);">0,005</span>
<div class="a" style="left:519px;top:341px;width:152px;height:20px;border:1px solid #8ca5c4;background:#ccdced"></div>
<div class="a" style="left:654px;top:342px;width:16px;height:18px;border-left:1px solid #8ca5c4;background:#ccdced"></div>
<svg style="left:660px;top:344.8px" width="6" height="14" viewBox="0 0 6 14"><path d="M0 3.2L2.5 .2L5 3.2Z" fill="#a9b9d1"/><path d="M0 9.2H5L2.5 12.2Z" fill="#a9b9d1"/></svg>
<span class="t" style="left:603.09px;top:344.84px;font-size:12px;line-height:12px;color:#000;-webkit-text-stroke:.06px #000;transform:scaleX(0.8950);">4.828,486</span>
<div class="a" style="left:857px;top:341px;width:157px;height:20px;border:1px solid #8ca5c4;background:#ccdced"></div>
<div class="a" style="left:997px;top:342px;width:16px;height:18px;border-left:1px solid #8ca5c4;background:#ccdced"></div>
<svg style="left:1003px;top:344.8px" width="6" height="14" viewBox="0 0 6 14"><path d="M0 3.2L2.5 .2L5 3.2Z" fill="#a9b9d1"/><path d="M0 9.2H5L2.5 12.2Z" fill="#a9b9d1"/></svg>
<span class="t" style="left:967.00px;top:344.84px;font-size:12px;line-height:12px;color:#000;-webkit-text-stroke:.06px #000;transform:scaleX(0.8950);">1,476</span>
<div class="a" style="left:1205px;top:341px;width:152px;height:20px;border:1px solid #8ca5c4;background:#ccdced"></div>
<div class="a" style="left:1340px;top:342px;width:16px;height:18px;border-left:1px solid #8ca5c4;background:#ccdced"></div>
<svg style="left:1346px;top:344.8px" width="6" height="14" viewBox="0 0 6 14"><path d="M0 3.2L2.5 .2L5 3.2Z" fill="#a9b9d1"/><path d="M0 9.2H5L2.5 12.2Z" fill="#a9b9d1"/></svg>
<span class="t" style="left:1310.06px;top:344.84px;font-size:12px;line-height:12px;color:#000;-webkit-text-stroke:.06px #000;transform:scaleX(0.8950);">6,747</span>
<div class="a" style="left:1548px;top:341px;width:145px;height:20px;border:1px solid #8ca5c4;background:#ccdced"></div>
<div class="a" style="left:1676px;top:342px;width:16px;height:18px;border-left:1px solid #8ca5c4;background:#ccdced"></div>
<svg style="left:1682px;top:344.8px" width="6" height="14" viewBox="0 0 6 14"><path d="M0 3.2L2.5 .2L5 3.2Z" fill="#a9b9d1"/><path d="M0 9.2H5L2.5 12.2Z" fill="#a9b9d1"/></svg>
<span class="t" style="left:1645.97px;top:344.84px;font-size:12px;line-height:12px;color:#000;-webkit-text-stroke:.06px #000;transform:scaleX(0.8950);">0,105</span>
<div class="a" style="left:519px;top:365px;width:152px;height:20px;border:1px solid #8ca5c4;background:#ccdced"></div>
<div class="a" style="left:654px;top:366px;width:16px;height:18px;border-left:1px solid #8ca5c4;background:#ccdced"></div>
<svg style="left:660px;top:368.8px" width="6" height="14" viewBox="0 0 6 14"><path d="M0 3.2L2.5 .2L5 3.2Z" fill="#a9b9d1"/><path d="M0 9.2H5L2.5 12.2Z" fill="#a9b9d1"/></svg>
<span class="t" style="left:597.12px;top:368.84px;font-size:12px;line-height:12px;color:#000;-webkit-text-stroke:.06px #000;transform:scaleX(0.8950);">96.569,713</span>
<div class="a" style="left:857px;top:365px;width:157px;height:20px;border:1px solid #8ca5c4;background:#ccdced"></div>
<div class="a" style="left:997px;top:366px;width:16px;height:18px;border-left:1px solid #8ca5c4;background:#ccdced"></div>
<svg style="left:1003px;top:368.8px" width="6" height="14" viewBox="0 0 6 14"><path d="M0 3.2L2.5 .2L5 3.2Z" fill="#a9b9d1"/><path d="M0 9.2H5L2.5 12.2Z" fill="#a9b9d1"/></svg>
<span class="t" style="left:961.06px;top:368.84px;font-size:12px;line-height:12px;color:#000;-webkit-text-stroke:.06px #000;transform:scaleX(0.8950);">29,519</span>
<div class="a" style="left:1205px;top:365px;width:152px;height:20px;border:1px solid #8ca5c4;background:#ccdced"></div>
<div class="a" style="left:1340px;top:366px;width:16px;height:18px;border-left:1px solid #8ca5c4;background:#ccdced"></div>
<svg style="left:1346px;top:368.8px" width="6" height="14" viewBox="0 0 6 14"><path d="M0 3.2L2.5 .2L5 3.2Z" fill="#a9b9d1"/><path d="M0 9.2H5L2.5 12.2Z" fill="#a9b9d1"/></svg>
<span class="t" style="left:1298.03px;top:368.84px;font-size:12px;line-height:12px;color:#000;-webkit-text-stroke:.06px #000;transform:scaleX(0.8950);">134,945</span>
<div class="a" style="left:1548px;top:365px;width:145px;height:20px;border:1px solid #8ca5c4;background:#ccdced"></div>
<div class="a" style="left:1676px;top:366px;width:16px;height:18px;border-left:1px solid #8ca5c4;background:#ccdced"></div>
<svg style="left:1682px;top:368.8px" width="6" height="14" viewBox="0 0 6 14"><path d="M0 3.2L2.5 .2L5 3.2Z" fill="#a9b9d1"/><path d="M0 9.2H5L2.5 12.2Z" fill="#a9b9d1"/></svg>
<span class="t" style="left:1646.03px;top:368.84px;font-size:12px;line-height:12px;color:#000;-webkit-text-stroke:.06px #000;transform:scaleX(0.8950);">2,109</span>
<span class="t" style="left:332.65px;top:417.84px;font-size:12px;line-height:12px;color:#15284f;transform:scaleX(0.8619);">Fonte dati</span>
<div class="a" style="left:519px;top:414px;width:1174px;height:20px;border:1px solid #8ca5c4;background:#ccdced"></div>
<span class="t" style="left:522.61px;top:417.84px;font-size:12px;line-height:12px;color:#000;-webkit-text-stroke:.06px #000;transform:scaleX(0.9043);">Delibera EEN 3/08, art. 2</span>
<span class="t" style="left:332.24px;top:441.84px;font-size:12px;line-height:12px;color:#15284f;transform:scaleX(0.9243);">Coeff. conv. MWh in TEP [TEP/MWh]</span>
<div class="a" style="left:519px;top:438px;width:152px;height:20px;border:1px solid #8ca5c4;background:#fffffb"></div>
<div class="a" style="left:654px;top:439px;width:16px;height:18px;border-left:1px solid #8ca5c4;background:linear-gradient(#deebf9,#cfe0f2)"></div>
<svg style="left:660px;top:441.8px" width="6" height="14" viewBox="0 0 6 14"><path d="M0 3.2L2.5 .2L5 3.2Z" fill="#4a5578"/><path d="M0 9.2H5L2.5 12.2Z" fill="#4a5578"/></svg>
<span class="t" style="left:624.06px;top:441.84px;font-size:12px;line-height:12px;color:#000;-webkit-text-stroke:.06px #000;transform:scaleX(0.8950);">0,187</span>
<span class="t" style="left:674.87px;top:441.84px;font-size:12px;line-height:12px;color:#15284f;transform:scaleX(0.8701);">TEP risparmiate in un anno</span>
<div class="a" style="left:857px;top:438px;width:157px;height:20px;border:1px solid #8ca5c4;background:#ccdced"></div>
<div class="a" style="left:997px;top:439px;width:16px;height:18px;border-left:1px solid #8ca5c4;background:#ccdced"></div>
<svg style="left:1003px;top:441.8px" width="6" height="14" viewBox="0 0 6 14"><path d="M0 3.2L2.5 .2L5 3.2Z" fill="#a9b9d1"/><path d="M0 9.2H5L2.5 12.2Z" fill="#a9b9d1"/></svg>
<span class="t" style="left:967.00px;top:441.84px;font-size:12px;line-height:12px;color:#000;-webkit-text-stroke:.06px #000;transform:scaleX(0.8950);">3,943</span>
<span class="t" style="left:1017.67px;top:441.84px;font-size:12px;line-height:12px;color:#15284f;transform:scaleX(0.8684);">TEP risparmiate per il ciclo di vita</span>
<div class="a" style="left:1205px;top:438px;width:152px;height:20px;border:1px solid #8ca5c4;background:#ccdced"></div>
<div class="a" style="left:1340px;top:439px;width:16px;height:18px;border-left:1px solid #8ca5c4;background:#ccdced"></div>
<svg style="left:1346px;top:441.8px" width="6" height="14" viewBox="0 0 6 14"><path d="M0 3.2L2.5 .2L5 3.2Z" fill="#a9b9d1"/><path d="M0 9.2H5L2.5 12.2Z" fill="#a9b9d1"/></svg>
<span class="t" style="left:1304.02px;top:441.84px;font-size:12px;line-height:12px;color:#000;-webkit-text-stroke:.06px #000;transform:scaleX(0.8950);">78,858</span>
<svg style="left:800px;top:466px" width="320" height="18" viewBox="800 466 320 18"><defs><radialGradient id="rs" cx=".5" cy=".65" r=".6"><stop offset="0" stop-color="#eef5fd"/><stop offset="1" stop-color="#9fbfe8"/></radialGradient></defs><circle cx="813.5" cy="474.5" r="5.9" fill="#f6f9fc" stroke="#a3bce0" stroke-width="1.5"/><circle cx="813.5" cy="474.5" r="3.4" fill="url(#rs)" stroke="#3f5f9a" stroke-width="1.3"/><circle cx="867.4" cy="474.5" r="5.9" fill="#f6f9fc" stroke="#a3bce0" stroke-width="1.5"/><circle cx="867.4" cy="474.5" r="3.7" fill="#e5e7e9" stroke="#bfc3c9" stroke-width="1"/><circle cx="924.4" cy="474.5" r="5.9" fill="#f6f9fc" stroke="#a3bce0" stroke-width="1.5"/><circle cx="924.4" cy="474.5" r="3.7" fill="#e5e7e9" stroke="#bfc3c9" stroke-width="1"/><circle cx="977.5" cy="474.5" r="5.9" fill="#f6f9fc" stroke="#a3bce0" stroke-width="1.5"/><circle cx="977.5" cy="474.5" r="3.7" fill="#e5e7e9" stroke="#bfc3c9" stroke-width="1"/><circle cx="1047.5" cy="474.5" r="5.9" fill="#f6f9fc" stroke="#a3bce0" stroke-width="1.5"/><circle cx="1047.5" cy="474.5" r="3.7" fill="#e5e7e9" stroke="#bfc3c9" stroke-width="1"/><circle cx="1103.4" cy="474.5" r="5.9" fill="#f6f9fc" stroke="#a3bce0" stroke-width="1.5"/><circle cx="1103.4" cy="474.5" r="3.7" fill="#e5e7e9" stroke="#bfc3c9" stroke-width="1"/></svg>
<span class="t" style="left:823.61px;top:467.84px;font-size:12px;line-height:12px;color:#000;-webkit-text-stroke:.06px #000;transform:scaleX(0.8087);">CO</span>
<span class="t" style="left:838.68px;top:473.23px;font-size:8px;line-height:8px;color:#000;-webkit-text-stroke:.06px #000;transform:scaleX(1.0427);">2</span>
<span class="t" style="left:877.44px;top:468.84px;font-size:12px;line-height:12px;color:#000;-webkit-text-stroke:.06px #000;transform:scaleX(0.8695);">NOx</span>
<span class="t" style="left:935.26px;top:467.84px;font-size:12px;line-height:12px;color:#000;-webkit-text-stroke:.06px #000;transform:scaleX(0.8139);">SO</span>
<span class="t" style="left:949.70px;top:473.23px;font-size:8px;line-height:8px;color:#000;-webkit-text-stroke:.06px #000;transform:scaleX(0.9878);">2</span>
<span class="t" style="left:987.43px;top:468.84px;font-size:12px;line-height:12px;color:#000;-webkit-text-stroke:.06px #000;transform:scaleX(0.8886);">Polveri</span>
<span class="t" style="left:1058.77px;top:468.84px;font-size:12px;line-height:12px;color:#000;-webkit-text-stroke:.06px #000;transform:scaleX(0.8469);">TEP</span>
<span class="t" style="left:1113.55px;top:468.84px;font-size:12px;line-height:12px;color:#000;-webkit-text-stroke:.06px #000;transform:scaleX(0.8636);">Producibilit&agrave;</span>
<svg style="left:326px;top:486px" width="1372" height="554" viewBox="326 486 1372 554"><rect x="366.5" y="1003.95" width="1329.5" height="1" fill="#ecede8"/><rect x="366.5" y="958.85" width="1329.5" height="1" fill="#ecede8"/><rect x="366.5" y="913.75" width="1329.5" height="1" fill="#ecede8"/><rect x="366.5" y="868.65" width="1329.5" height="1" fill="#ecede8"/><rect x="366.5" y="823.55" width="1329.5" height="1" fill="#ecede8"/><rect x="366.5" y="778.45" width="1329.5" height="1" fill="#ecede8"/><rect x="366.5" y="733.35" width="1329.5" height="1" fill="#ecede8"/><rect x="366.5" y="688.25" width="1329.5" height="1" fill="#ecede8"/><rect x="366.5" y="643.15" width="1329.5" height="1" fill="#ecede8"/><rect x="366.5" y="598.05" width="1329.5" height="1" fill="#ecede8"/><rect x="366.5" y="552.95" width="1329.5" height="1" fill="#ecede8"/><rect x="366.5" y="507.85" width="1329.5" height="1" fill="#ecede8"/><rect x="399.70" y="508.3" width="1" height="496" fill="#ecede8"/><rect x="466.18" y="508.3" width="1" height="496" fill="#ecede8"/><rect x="532.66" y="508.3" width="1" height="496" fill="#ecede8"/><rect x="599.14" y="508.3" width="1" height="496" fill="#ecede8"/><rect x="665.62" y="508.3" width="1" height="496" fill="#ecede8"/><rect x="732.10" y="508.3" width="1" height="496" fill="#ecede8"/><rect x="798.58" y="508.3" width="1" height="496" fill="#ecede8"/><rect x="865.06" y="508.3" width="1" height="496" fill="#ecede8"/><rect x="931.54" y="508.3" width="1" height="496" fill="#ecede8"/><rect x="998.02" y="508.3" width="1" height="496" fill="#ecede8"/><rect x="1064.50" y="508.3" width="1" height="496" fill="#ecede8"/><rect x="1130.98" y="508.3" width="1" height="496" fill="#ecede8"/><rect x="1197.46" y="508.3" width="1" height="496" fill="#ecede8"/><rect x="1263.94" y="508.3" width="1" height="496" fill="#ecede8"/><rect x="1330.42" y="508.3" width="1" height="496" fill="#ecede8"/><rect x="1396.90" y="508.3" width="1" height="496" fill="#ecede8"/><rect x="1463.38" y="508.3" width="1" height="496" fill="#ecede8"/><rect x="1529.86" y="508.3" width="1" height="496" fill="#ecede8"/><rect x="1596.34" y="508.3" width="1" height="496" fill="#ecede8"/><rect x="1662.82" y="508.3" width="1" height="496" fill="#ecede8"/><rect x="383.10" y="982.37" width="33" height="21.78" fill="#0096ff"/><rect x="449.58" y="960.60" width="33" height="43.55" fill="#0096ff"/><rect x="516.06" y="938.82" width="33" height="65.33" fill="#0096ff"/><rect x="582.54" y="917.04" width="33" height="87.11" fill="#0096ff"/><rect x="649.02" y="895.27" width="33" height="108.88" fill="#0096ff"/><rect x="715.50" y="873.49" width="33" height="130.66" fill="#0096ff"/><rect x="781.98" y="851.71" width="33" height="152.44" fill="#0096ff"/><rect x="848.46" y="829.94" width="33" height="174.21" fill="#0096ff"/><rect x="914.94" y="808.16" width="33" height="195.99" fill="#0096ff"/><rect x="981.42" y="786.39" width="33" height="217.76" fill="#0096ff"/><rect x="1047.90" y="764.61" width="33" height="239.54" fill="#0096ff"/><rect x="1114.38" y="742.83" width="33" height="261.32" fill="#0096ff"/><rect x="1180.86" y="721.06" width="33" height="283.09" fill="#0096ff"/><rect x="1247.34" y="699.28" width="33" height="304.87" fill="#0096ff"/><rect x="1313.82" y="677.50" width="33" height="326.65" fill="#0096ff"/><rect x="1380.30" y="655.73" width="33" height="348.42" fill="#0096ff"/><rect x="1446.78" y="633.95" width="33" height="370.20" fill="#0096ff"/><rect x="1513.26" y="612.17" width="33" height="391.98" fill="#0096ff"/><rect x="1579.74" y="590.40" width="33" height="413.75" fill="#0096ff"/><rect x="1646.22" y="568.62" width="33" height="435.53" fill="#0096ff"/></svg>
<span class="t" style="left:357.13px;top:999.53px;font-size:10px;line-height:10px;color:#a8a5a2;-webkit-text-stroke:0;transform:scaleX(1.0000);">0</span>
<span class="t" style="left:334.88px;top:954.53px;font-size:10px;line-height:10px;color:#a8a5a2;-webkit-text-stroke:0;transform:scaleX(1.0000);">10000</span>
<span class="t" style="left:334.88px;top:909.53px;font-size:10px;line-height:10px;color:#a8a5a2;-webkit-text-stroke:0;transform:scaleX(1.0000);">20000</span>
<span class="t" style="left:334.88px;top:864.53px;font-size:10px;line-height:10px;color:#a8a5a2;-webkit-text-stroke:0;transform:scaleX(1.0000);">30000</span>
<span class="t" style="left:334.88px;top:819.53px;font-size:10px;line-height:10px;color:#a8a5a2;-webkit-text-stroke:0;transform:scaleX(1.0000);">40000</span>
<span class="t" style="left:334.88px;top:774.53px;font-size:10px;line-height:10px;color:#a8a5a2;-webkit-text-stroke:0;transform:scaleX(1.0000);">50000</span>
<span class="t" style="left:334.88px;top:729.53px;font-size:10px;line-height:10px;color:#a8a5a2;-webkit-text-stroke:0;transform:scaleX(1.0000);">60000</span>
<span class="t" style="left:334.88px;top:684.53px;font-size:10px;line-height:10px;color:#a8a5a2;-webkit-text-stroke:0;transform:scaleX(1.0000);">70000</span>
<span class="t" style="left:334.88px;top:639.53px;font-size:10px;line-height:10px;color:#a8a5a2;-webkit-text-stroke:0;transform:scaleX(1.0000);">80000</span>
<span class="t" style="left:334.88px;top:594.53px;font-size:10px;line-height:10px;color:#a8a5a2;-webkit-text-stroke:0;transform:scaleX(1.0000);">90000</span>
<span class="t" style="left:329.32px;top:548.53px;font-size:10px;line-height:10px;color:#a8a5a2;-webkit-text-stroke:0;transform:scaleX(1.0000);">100000</span>
<span class="t" style="left:330.06px;top:503.54px;font-size:10px;line-height:10px;color:#a8a5a2;-webkit-text-stroke:0;transform:scaleX(1.0000);">110000</span>
<span class="t" style="left:396.98px;top:1010.53px;font-size:10px;line-height:10px;color:#a8a5a2;-webkit-text-stroke:0;transform:scaleX(1.0000);">1</span>
<span class="t" style="left:463.60px;top:1010.53px;font-size:10px;line-height:10px;color:#a8a5a2;-webkit-text-stroke:0;transform:scaleX(1.0000);">2</span>
<span class="t" style="left:530.11px;top:1010.53px;font-size:10px;line-height:10px;color:#a8a5a2;-webkit-text-stroke:0;transform:scaleX(1.0000);">3</span>
<span class="t" style="left:596.59px;top:1010.53px;font-size:10px;line-height:10px;color:#a8a5a2;-webkit-text-stroke:0;transform:scaleX(1.0000);">4</span>
<span class="t" style="left:663.05px;top:1010.53px;font-size:10px;line-height:10px;color:#a8a5a2;-webkit-text-stroke:0;transform:scaleX(1.0000);">5</span>
<span class="t" style="left:729.49px;top:1010.53px;font-size:10px;line-height:10px;color:#a8a5a2;-webkit-text-stroke:0;transform:scaleX(1.0000);">6</span>
<span class="t" style="left:795.99px;top:1010.53px;font-size:10px;line-height:10px;color:#a8a5a2;-webkit-text-stroke:0;transform:scaleX(1.0000);">7</span>
<span class="t" style="left:862.48px;top:1010.53px;font-size:10px;line-height:10px;color:#a8a5a2;-webkit-text-stroke:0;transform:scaleX(1.0000);">8</span>
<span class="t" style="left:928.96px;top:1010.53px;font-size:10px;line-height:10px;color:#a8a5a2;-webkit-text-stroke:0;transform:scaleX(1.0000);">9</span>
<span class="t" style="left:992.47px;top:1010.53px;font-size:10px;line-height:10px;color:#a8a5a2;-webkit-text-stroke:0;transform:scaleX(1.0000);">10</span>
<span class="t" style="left:1059.37px;top:1010.53px;font-size:10px;line-height:10px;color:#a8a5a2;-webkit-text-stroke:0;transform:scaleX(1.0000);">11</span>
<span class="t" style="left:1125.49px;top:1010.53px;font-size:10px;line-height:10px;color:#a8a5a2;-webkit-text-stroke:0;transform:scaleX(1.0000);">12</span>
<span class="t" style="left:1191.94px;top:1010.53px;font-size:10px;line-height:10px;color:#a8a5a2;-webkit-text-stroke:0;transform:scaleX(1.0000);">13</span>
<span class="t" style="left:1258.34px;top:1010.53px;font-size:10px;line-height:10px;color:#a8a5a2;-webkit-text-stroke:0;transform:scaleX(1.0000);">14</span>
<span class="t" style="left:1324.89px;top:1010.53px;font-size:10px;line-height:10px;color:#a8a5a2;-webkit-text-stroke:0;transform:scaleX(1.0000);">15</span>
<span class="t" style="left:1391.38px;top:1010.53px;font-size:10px;line-height:10px;color:#a8a5a2;-webkit-text-stroke:0;transform:scaleX(1.0000);">16</span>
<span class="t" style="left:1457.89px;top:1010.53px;font-size:10px;line-height:10px;color:#a8a5a2;-webkit-text-stroke:0;transform:scaleX(1.0000);">17</span>
<span class="t" style="left:1524.33px;top:1010.53px;font-size:10px;line-height:10px;color:#a8a5a2;-webkit-text-stroke:0;transform:scaleX(1.0000);">18</span>
<span class="t" style="left:1590.83px;top:1010.53px;font-size:10px;line-height:10px;color:#a8a5a2;-webkit-text-stroke:0;transform:scaleX(1.0000);">19</span>
<span class="t" style="left:1657.40px;top:1010.53px;font-size:10px;line-height:10px;color:#a8a5a2;-webkit-text-stroke:0;transform:scaleX(1.0000);">20</span>
<span class="t" style="left:1020.46px;top:1019.53px;font-size:10px;line-height:10px;color:#a8a5a2;-webkit-text-stroke:0;transform:scaleX(1.0296);">Mesi</span>
<svg style="left:980px;top:490px" width="18" height="18" viewBox="980 490 18 18"><circle cx="988.5" cy="498.4" r="7.2" fill="#0096ff"/></svg>
<span class="t" style="left:1000.36px;top:491.84px;font-size:12px;line-height:12px;color:#1a1a1a;-webkit-text-stroke:.06px #000;transform:scaleX(0.8907);">Co2 [kg]</span>
<div class="a" style="left:1708px;top:51px;width:1px;height:1002px;background:#7394c4"></div><div class="a" style="left:7px;top:144px;width:1px;height:908px;background:#7394c4"></div>
</body></html>
